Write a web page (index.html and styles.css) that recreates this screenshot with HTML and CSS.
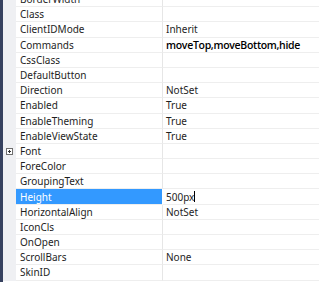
FILE: index.html
```html
<!DOCTYPE html>
<html lang="en">
<head>
<meta charset="UTF-8">
<title>Properties</title>
<link rel="stylesheet" href="styles.css">
</head>
<body>
<div class="frame">
  <div class="edge"></div>
  <div class="grid">
    <div class="row"><div class="gut"></div><div class="name">BorderWidth</div><div class="val"></div></div>
    <div class="row"><div class="gut"></div><div class="name">Class</div><div class="val"></div></div>
    <div class="row"><div class="gut"></div><div class="name">ClientIDMode</div><div class="val">Inherit</div></div>
    <div class="row"><div class="gut"></div><div class="name">Commands</div><div class="val bold">moveTop,moveBottom,hide</div></div>
    <div class="row"><div class="gut"></div><div class="name">CssClass</div><div class="val"></div></div>
    <div class="row"><div class="gut"></div><div class="name">DefaultButton</div><div class="val"></div></div>
    <div class="row"><div class="gut"></div><div class="name">Direction</div><div class="val">NotSet</div></div>
    <div class="row"><div class="gut"></div><div class="name">Enabled</div><div class="val">True</div></div>
    <div class="row"><div class="gut"></div><div class="name">EnableTheming</div><div class="val">True</div></div>
    <div class="row"><div class="gut"></div><div class="name">EnableViewState</div><div class="val">True</div></div>
    <div class="row"><div class="gut"><span class="expand"></span></div><div class="name">Font</div><div class="val"></div></div>
    <div class="row"><div class="gut"></div><div class="name">ForeColor</div><div class="val"></div></div>
    <div class="row"><div class="gut"></div><div class="name">GroupingText</div><div class="val"></div></div>
    <div class="row sel"><div class="gut"></div><div class="name">Height</div><div class="val">500px<span class="caret"></span></div></div>
    <div class="row"><div class="gut"></div><div class="name">HorizontalAlign</div><div class="val">NotSet</div></div>
    <div class="row"><div class="gut"></div><div class="name">IconCls</div><div class="val"></div></div>
    <div class="row"><div class="gut"></div><div class="name">OnOpen</div><div class="val"></div></div>
    <div class="row"><div class="gut"></div><div class="name">ScrollBars</div><div class="val">None</div></div>
    <div class="row"><div class="gut"></div><div class="name">SkinID</div><div class="val"></div></div>
  </div>
</div>
</body>
</html>
```

FILE: styles.css
```css
html, body {
  margin: 0;
  padding: 0;
  background: #ffffff;
  overflow: hidden;
}
body {
  font-family: "Noto Sans", "Open Sans", sans-serif;
  font-size: 10px;
  color: #1e1e1e;
}
.frame {
  display: flex;
  height: 282px;
}
.edge {
  width: 3px;
  flex: none;
  background: #36415f;
}
.grid {
  flex: 1;
  margin-top: -8px;
}
.row {
  display: grid;
  grid-template-columns: 13px 147px 1fr;
  height: 15.2px;
}
.gut {
  background: #eff0f3;
  display: flex;
  align-items: center;
  justify-content: center;
}
.name, .val {
  display: flex;
  align-items: center;
  box-sizing: border-box;
  border-bottom: 1px solid #eeeeee;
  white-space: nowrap;
  overflow: hidden;
}
.name {
  padding-left: 4px;
  border-right: 1px solid #e6e6e6;
}
.val {
  padding-left: 3px;
}
.bold {
  font-family: "Open Sans", "Noto Sans", sans-serif;
  font-weight: 600;
  font-size: 10.5px;
  letter-spacing: -0.3px;
  color: #000000;
}
.sel .name {
  background: #3399ff;
  color: #ffffff;
  border-right-color: #ffffff;
}
.caret {
  display: inline-block;
  width: 1px;
  height: 11px;
  background: #000000;
}
.expand {
  width: 7px;
  height: 7px;
  box-sizing: border-box;
  border: 1px solid #6e6e6e;
  background: #ffffff;
  position: relative;
}
.expand::before, .expand::after {
  content: "";
  position: absolute;
  background: #333333;
}
.expand::before {
  width: 3px;
  height: 1px;
  left: 1px;
  top: 2px;
}
.expand::after {
  width: 1px;
  height: 3px;
  left: 2px;
  top: 1px;
}
```
